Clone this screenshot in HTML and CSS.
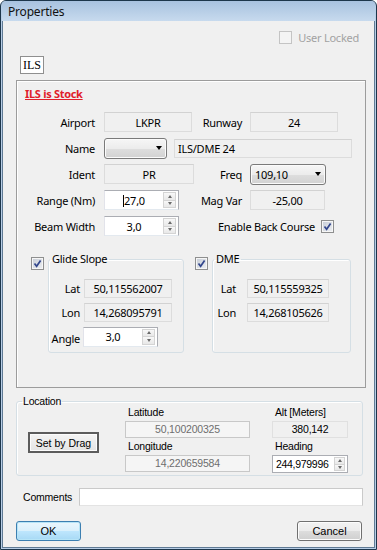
FILE: index.html
```html
<!DOCTYPE html>
<html lang="en">
<head>
  <meta charset="UTF-8" />
  <title>Properties</title>
  <link rel="stylesheet" href="styles.css">
</head>
<body>
<div class="window">
  <div class="titlebar">Properties</div>
  <div class="client">

    <div class="top-row">
      <span class="cb cb-dis"></span>
      <span class="dis-text">User Locked</span>
    </div>

    <div class="tab">ILS</div>

    <div class="panel">
      <div class="stock">ILS is Stock</div>

      <div class="form">
        <div class="row">
          <span class="lbl">Airport</span>
          <span class="c1"><span class="ro w88">LKPR</span></span>
          <span class="lbl2">Runway</span>
          <span class="ro w88 f2">24</span>
        </div>
        <div class="row">
          <span class="lbl">Name</span>
          <span class="combo w63"><span class="ctext"></span><span class="arrow"></span></span>
          <span class="ro left name-field">ILS/DME 24</span>
        </div>
        <div class="row">
          <span class="lbl">Ident</span>
          <span class="c1"><span class="ro w90">PR</span></span>
          <span class="lbl2">Freq</span>
          <span class="combo w76 f2"><span class="ctext">109,10</span><span class="arrow"></span></span>
        </div>
        <div class="row">
          <span class="lbl">Range (Nm)</span>
          <span class="c1">
            <span class="spin w75"><span class="val"><span class="caret"></span>27,0</span><span class="arrows"><i class="up"></i><i class="dn"></i></span></span>
          </span>
          <span class="lbl2">Mag Var</span>
          <span class="ro w75 f2">-25,00</span>
        </div>
        <div class="row">
          <span class="lbl">Beam Width</span>
          <span class="c1">
            <span class="spin w75"><span class="val">3,0</span><span class="arrows"><i class="up"></i><i class="dn"></i></span></span>
          </span>
          <span class="ebc">
            Enable Back Course
            <span class="cb"><svg viewBox="0 0 13 13" width="13" height="13"><path d="M3.5 6.5 L5.6 9.2 L9.6 3.4" fill="none" stroke="#32468c" stroke-width="1.7"/></svg></span>
          </span>
        </div>
      </div>

      <div class="groups">
        <span class="cb gcb"><svg viewBox="0 0 13 13" width="13" height="13"><path d="M3.5 6.5 L5.6 9.2 L9.6 3.4" fill="none" stroke="#32468c" stroke-width="1.7"/></svg></span>
        <fieldset class="grp grp-gs">
          <legend>Glide Slope</legend>
          <div class="grow">
            <span class="glbl">Lat</span>
            <span class="ro g-field">50,115562007</span>
          </div>
          <div class="grow">
            <span class="glbl">Lon</span>
            <span class="ro g-field">14,268095791</span>
          </div>
          <div class="grow">
            <span class="glbl angle">Angle</span>
            <span class="spin w75 g-spin"><span class="val">3,0</span><span class="arrows"><i class="up"></i><i class="dn"></i></span></span>
          </div>
        </fieldset>

        <span class="cb gcb dme-cb"><svg viewBox="0 0 13 13" width="13" height="13"><path d="M3.5 6.5 L5.6 9.2 L9.6 3.4" fill="none" stroke="#32468c" stroke-width="1.7"/></svg></span>
        <fieldset class="grp grp-dme">
          <legend>DME</legend>
          <div class="grow">
            <span class="glbl dlbl">Lat</span>
            <span class="ro d-field">50,115559325</span>
          </div>
          <div class="grow">
            <span class="glbl dlbl">Lon</span>
            <span class="ro d-field">14,268105626</span>
          </div>
        </fieldset>
      </div>
    </div>

    <fieldset class="loc">
      <legend>Location</legend>
      <div class="loc-body">
        <button class="drag">Set by Drag</button>
        <div class="lcol lcol-mid">
          <div class="cap">Latitude</div>
          <div class="dis">50,100200325</div>
          <div class="cap">Longitude</div>
          <div class="dis">14,220659584</div>
        </div>
        <div class="lcol lcol-right">
          <div class="cap">Alt [Meters]</div>
          <div class="alt">380,142</div>
          <div class="cap">Heading</div>
          <div class="spin spin-h"><span class="val">244,979996</span><span class="arrows"><i class="up"></i><i class="dn"></i></span></div>
        </div>
      </div>
    </fieldset>

    <div class="comments">
      <span class="clbl">Comments</span>
      <span class="cinput"></span>
    </div>

    <div class="buttons">
      <button class="btn btn-ok">OK</button>
      <button class="btn">Cancel</button>
    </div>

  </div>
</div>
</body>
</html>
```

FILE: styles.css
```css
* {
  box-sizing: border-box;
}
body {
  margin: 0;
  background: #fff;
  font-family: "Noto Sans", sans-serif;
  font-size: 11px;
  letter-spacing: -0.25px;
  color: #000;
}
.window {
  width: 377px;
  height: 550px;
  border: 1px solid #1d364b;
  border-radius: 6px 6px 0 0;
  background: #b7cde6;
  padding: 0 1px 1px;
  display: flex;
  flex-direction: column;
  overflow: hidden;
}
.titlebar {
  flex: none;
  height: 20px;
  padding-left: 6px;
  line-height: 22px;
  font-size: 12px;
  letter-spacing: -0.2px;
  color: #111;
  background: linear-gradient(#a8c2df, #c7daee);
}
.client {
  flex: 1;
  background: #f0f0f0;
  border: 1px solid #5f7a94;
  border-top: none;
}

/* checkboxes */
.cb {
  display: inline-block;
  width: 13px;
  height: 13px;
  border: 1px solid #8e8f8f;
  background: linear-gradient(135deg, #c6ccd6, #eef0f3);
  box-shadow: inset 0 0 0 1px #f6f6f6;
  flex: none;
}
.cb svg {
  display: block;
  margin: -1px;
}
.cb-dis {
  border-color: #c4c4c4;
  background: #f4f4f4;
  box-shadow: none;
}

.top-row {
  margin-top: 10px;
  height: 13px;
  padding-right: 15px;
  display: flex;
  justify-content: flex-end;
  align-items: center;
  gap: 6px;
}
.dis-text {
  color: #a2a2a2;
}

.tab {
  margin: 12px 0 0 17px;
  width: 24px;
  height: 18px;
  background: #fff;
  border: 1px solid #8f8f8f;
  font-family: "Liberation Serif", serif;
  font-size: 12px;
  letter-spacing: 0;
  line-height: 16px;
  text-align: center;
}

.panel {
  margin: 6px 0 0 13px;
  width: 350px;
  height: 308px;
  border: 1px solid #9c9c9c;
  box-shadow: inset 1px 1px 0 #fff;
}
.stock {
  margin: 6px 0 0 8px;
  color: #e0202a;
  font-weight: bold;
  text-decoration: underline;
  line-height: 14px;
  letter-spacing: -0.3px;
}
.form {
  margin-top: 11px;
}
.row {
  display: flex;
  align-items: center;
  height: 20px;
  margin-bottom: 6px;
}
.lbl {
  width: 78px;
  text-align: right;
  margin-right: 9px;
}
.c1 {
  width: 90px;
  display: flex;
}
.lbl2 {
  width: 48px;
  text-align: right;
  margin-right: 8px;
}

/* read only box */
.ro {
  display: flex;
  align-items: center;
  justify-content: center;
  height: 20px;
  background: #f0f0f0;
  border: 1px solid #dcdcdc;
  border-top-color: #d2d2d2;
}
.ro.left {
  justify-content: flex-start;
  padding-left: 3px;
}
.w63 { width: 63px; }
.w75 { width: 75px; }
.w76 { width: 76px; }
.w88 { width: 88px; }
.w90 { width: 90px; }
.name-field {
  width: 178px;
  margin-left: 7px;
  height: 19px;
}

.combo {
  display: flex;
  align-items: center;
  height: 21px;
  padding: 0 4px 0 4px;
  border: 1px solid #7a7a7a;
  border-radius: 3px;
  background: linear-gradient(#f6f6f6 0%, #ececec 50%, #dedede 51%, #d2d2d2 100%);
  box-shadow: inset 0 0 0 1px #fbfbfb;
}
.ctext {
  flex: 1;
}
.arrow {
  width: 0;
  height: 0;
  border-left: 3.5px solid transparent;
  border-right: 3.5px solid transparent;
  border-top: 4px solid #000;
}

.spin {
  display: flex;
  align-items: center;
  height: 20px;
  padding: 1px 1px 1px 0;
  background: #fff;
  border: 1px solid #abadb3;
  border-left-color: #e2e3ea;
  border-bottom-color: #e3e9ef;
}
.spin .val {
  flex: 1;
  text-align: center;
}
.caret {
  display: inline-block;
  width: 1px;
  height: 12px;
  background: #000;
  vertical-align: -2px;
}
.arrows {
  display: flex;
  flex-direction: column;
  width: 13px;
  height: 100%;
  margin-right: 1px;
}
.arrows i {
  flex: 1;
  display: flex;
  align-items: center;
  justify-content: center;
  border: 1px solid #d4d4d4;
  background: linear-gradient(#f8f8f8, #e8e8e8);
}
.arrows i + i {
  border-top: none;
}
.arrows .up::before {
  content: "";
  border-left: 2.5px solid transparent;
  border-right: 2.5px solid transparent;
  border-bottom: 3px solid #6a6a6a;
}
.arrows .dn::before {
  content: "";
  border-left: 2.5px solid transparent;
  border-right: 2.5px solid transparent;
  border-top: 3px solid #6a6a6a;
}

.ebc {
  width: 140px;
  display: flex;
  justify-content: flex-end;
  align-items: center;
  gap: 6px;
}

/* glide slope / dme */
.groups {
  display: flex;
  align-items: flex-start;
  margin-top: 16px;
}
.gcb {
  margin: 5px 4px 0 14px;
}
.dme-cb {
  margin: 5px 4px 0 11px;
}
.grp {
  margin: 0;
  padding: 13px 0 0 0;
  height: 101px;
  border: 1px solid #d5dfe5;
  border-radius: 3px;
  box-shadow: inset 1px 1px 0 #fff;
}
.grp legend {
  padding: 0 2px;
  margin-left: 1px;
  line-height: 14px;
}
.grp-gs {
  width: 136px;
}
.grp-dme {
  width: 139px;
}
.grow {
  display: flex;
  align-items: center;
  height: 19px;
  margin-bottom: 5px;
}
.glbl {
  width: 31px;
  text-align: right;
  margin-right: 4px;
}
.angle {
  padding-top: 4px;
  margin-right: 3px;
}
.g-field {
  width: 88px;
  height: 19px;
}
.g-spin {
  height: 20px;
}
.dlbl {
  width: 23px;
  margin-right: 11px;
}
.d-field {
  width: 82px;
  height: 19px;
}

/* location */
.loc {
  margin: 7px 0 0 13px;
  padding: 0;
  width: 347px;
  height: 81px;
  border: 1px solid #d5dfe5;
  border-radius: 3px;
  box-shadow: inset 1px 1px 0 #fff;
  font-family: "Liberation Sans", Arial, sans-serif;
  font-size: 10.5px;
  letter-spacing: -0.2px;
}
.loc legend {
  padding: 0 1px;
  margin-left: 5px;
  line-height: 13px;
}
.loc-body {
  display: flex;
  margin-top: -2px;
}
.drag {
  margin: 26px 0 0 11px;
  width: 71px;
  height: 21px;
  padding: 0;
  font: inherit;
  background: linear-gradient(#f4f4f4, #e4e4e4);
  border: 2px solid #5c5c5c;
  box-shadow: inset 0 0 0 1px #fcfcfc;
}
.lcol {
  display: flex;
  flex-direction: column;
}
.lcol-mid {
  width: 125px;
  margin-left: 26px;
}
.lcol-right {
  width: 76px;
  margin-left: 22px;
}
.cap {
  height: 13px;
  line-height: 13px;
  padding-left: 3px;
  margin-bottom: 2px;
}
.dis {
  height: 17px;
  margin-bottom: 2px;
  border: 1px solid #c8c8c8;
  background: #f5f5f5;
  color: #6e6e6e;
  text-align: center;
  line-height: 15px;
}
.alt {
  height: 17px;
  margin-bottom: 2px;
  border: 1px solid #e0e0e0;
  background: #f0f0f0;
  text-align: center;
  line-height: 15px;
}
.spin-h {
  height: 18px;
  font-size: 10.5px;
  letter-spacing: -0.3px;
  border-color: #abadb3;
}
.spin-h .val {
  text-align: left;
  padding-left: 3px;
}
.spin-h .arrows {
  width: 11px;
}

.comments {
  margin-top: 12px;
  display: flex;
  align-items: center;
  font-family: "Liberation Sans", Arial, sans-serif;
  font-size: 10.5px;
  letter-spacing: -0.2px;
}
.clbl {
  margin-left: 20px;
  width: 56px;
}
.cinput {
  width: 284px;
  height: 18px;
  background: #fff;
  border: 1px solid #cacaca;
  border-bottom-color: #e3e3e3;
}

.buttons {
  margin-top: 15px;
  display: flex;
  justify-content: space-between;
  padding: 0 12px 0 13px;
}
.btn {
  width: 65px;
  height: 20px;
  padding: 0;
  font-family: "Liberation Sans", Arial, sans-serif;
  font-size: 11px;
  border: 1px solid #707070;
  border-radius: 3px;
  background: linear-gradient(#f2f2f2 0%, #ebebeb 50%, #dddddd 51%, #cfcfcf 100%);
  box-shadow: inset 0 0 0 1px #fcfcfc;
}
.btn-ok {
  border-color: #3c7fb1;
  background: linear-gradient(#eaf6fd 0%, #d9f0fc 50%, #bee6fd 51%, #a7d9f5 100%);
  box-shadow: inset 0 0 0 1px #b6e4f7;
}
```
